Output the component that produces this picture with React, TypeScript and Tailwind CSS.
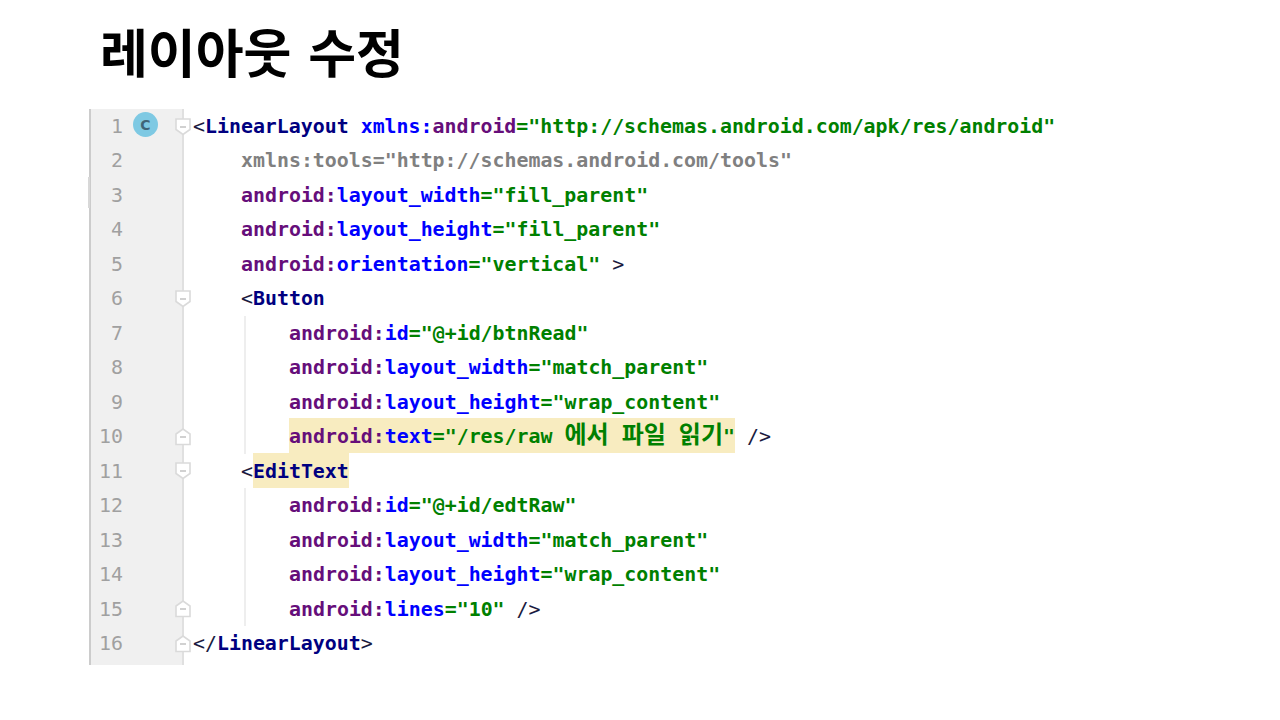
const P = "text-[#660e7a]";
const B = "text-[#0000ff]";
const G = "text-[#008000]";
const N = "text-[#000080]";
const T = "text-[#1a1a40] font-normal";
const K = "text-[#008000] text-[24px] leading-none [font-family:'Noto_Sans_CJK_KR',sans-serif]";

type Tok = [string, string];

function attr(name: string, value: string): Tok[] {
  return [["android:", P], [name, B], ["=" + value, G]];
}

type Row = { indent: 0 | 1 | 2; toks: Tok[]; fold?: "open" | "close" };

const rows: Row[] = [
  {
    indent: 0,
    fold: "open",
    toks: [
      ["<", T],
      ["LinearLayout", N],
      [" xmlns:", B],
      ["android", P],
      ['="http://schemas.android.com/apk/res/android"', G],
    ],
  },
  { indent: 1, toks: [['xmlns:tools="http://schemas.android.com/tools"', "text-[#808080]"]] },
  { indent: 1, toks: attr("layout_width", '"fill_parent"') },
  { indent: 1, toks: attr("layout_height", '"fill_parent"') },
  { indent: 1, toks: [...attr("orientation", '"vertical"'), [" >", T]] },
  { indent: 1, fold: "open", toks: [["<", T], ["Button", N]] },
  { indent: 2, toks: attr("id", '"@+id/btnRead"') },
  { indent: 2, toks: attr("layout_width", '"match_parent"') },
  { indent: 2, toks: attr("layout_height", '"wrap_content"') },
  { indent: 2, fold: "close", toks: [] },
  { indent: 1, fold: "open", toks: [] },
  { indent: 2, toks: attr("id", '"@+id/edtRaw"') },
  { indent: 2, toks: attr("layout_width", '"match_parent"') },
  { indent: 2, toks: attr("layout_height", '"wrap_content"') },
  { indent: 2, fold: "close", toks: [...attr("lines", '"10"'), [" />", T]] },
  { indent: 0, fold: "close", toks: [["</", T], ["LinearLayout", N], [">", T]] },
];

function Fold({ kind }: { kind: "open" | "close" }) {
  const d = kind === "open" ? "M1 1H15V11.5L8 16.5L1 11.5Z" : "M1 16.5H15V6L8 1L1 6Z";
  return (
    <svg width="16" height="18" viewBox="0 0 16 18" className="absolute right-[-9px] top-[8.5px]">
      <path d={d} fill="#ffffff" stroke="#dadada" strokeWidth="1.6" />
      <path d="M5 9H11" stroke="#b8b8b8" strokeWidth="1.3" />
    </svg>
  );
}

function Toks({ toks }: { toks: Tok[] }) {
  return (
    <>
      {toks.map((t, i) => (
        <span key={i} className={t[1]}>
          {t[0]}
        </span>
      ))}
    </>
  );
}

function CodeLine({ row, index }: { row: Row; index: number }) {
  if (index === 9) {
    return (
      <span>
        <span className="bg-[#f8ecc0] inline-flex items-baseline h-[35px] -mt-[2px] pt-[2px]">
          <Toks toks={attr("text", '"/res/raw ')} />
          <span className={K + " mr-[13px]"}>에서</span>
          <span className={K + " mr-[13px]"}>파일</span>
          <span className={K}>읽기</span>
          <span className="text-[#008000]">"</span>
        </span>
        <span className={T}> /&gt;</span>
      </span>
    );
  }
  if (index === 10) {
    return (
      <span>
        <span className={T}>&lt;</span>
        <span className="text-[#000080] bg-[#f8ecc0] inline-flex items-baseline h-[35px] -mt-[2px] pt-[2px]">EditText</span>
      </span>
    );
  }
  return <Toks toks={row.toks} />;
}

export default function App() {
  return (
    <div className="w-[1280px] h-[720px] bg-white overflow-hidden [font-family:'Noto_Sans_CJK_KR',sans-serif]">
      <h1 className="pl-[100px] pt-[15px] h-[109px] text-[52px] leading-[72px] font-bold text-black [word-spacing:5px]">
        레이아웃 수정
      </h1>
      <div className="ml-[89px] flex h-[556px] font-bold text-[19.9px] leading-[34.47px] [font-family:'DejaVu_Sans_Mono',monospace]">
        <div className="w-[95px] shrink-0 bg-[#f0f0f0] border-l-2 border-l-[#cccccc] border-r-2 border-r-[#e0e0e0]">
          {rows.map((r, i) => (
            <div key={i} className="relative flex items-center h-[34.47px]">
              <span className="w-[32px] pt-[2px] text-right font-normal text-[#a0a0a0]">{i + 1}</span>
              {i === 0 && (
                <span className="ml-[10px] -mt-[3px] w-[25px] h-[25px] rounded-full bg-[#7ec9e3] flex items-center justify-center text-[14px] leading-none text-[#3f6478] [font-family:'DejaVu_Sans',sans-serif]">
                  C
                </span>
              )}
              {i === 2 && <span className="absolute left-[-3px] top-[-1px] w-[2px] h-[31px] bg-[#d8d8d8]" />}
              {r.fold && <Fold kind={r.fold} />}
            </div>
          ))}
        </div>
        <div className="flex-1 whitespace-pre">
          {rows.map((r, i) => (
            <div key={i} className="h-[34.47px]">
              {r.indent === 0 && (
                <div className="pl-[9px] pt-px">
                  <CodeLine row={r} index={i} />
                </div>
              )}
              {r.indent === 1 && (
                <div className="pl-[57px] pt-px">
                  <CodeLine row={r} index={i} />
                </div>
              )}
              {r.indent === 2 && (
                <div className="ml-[60px] border-l-2 border-l-[#eeeeee] pl-[43px] pt-px h-full">
                  <CodeLine row={r} index={i} />
                </div>
              )}
            </div>
          ))}
        </div>
      </div>
    </div>
  );
}
